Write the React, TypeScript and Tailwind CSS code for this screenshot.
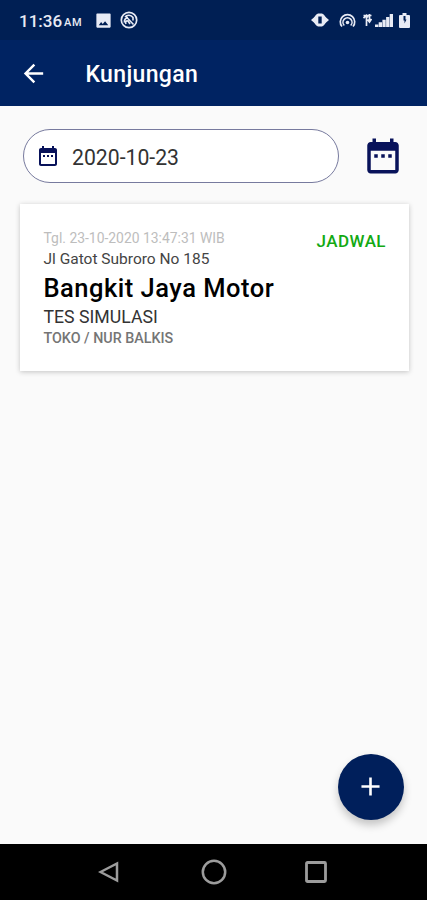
import type { ReactNode } from "react";

const CALENDAR =
  "M9 11H7v2h2v-2zm4 0h-2v2h2v-2zm4 0h-2v2h2v-2zm2-7h-1V2h-2v2H8V2H6v2H5c-1.11 0-1.99.9-1.99 2L3 20c0 1.1.89 2 2 2h14c1.1 0 2-.9 2-2V6c0-1.1-.9-2-2-2zm0 16H5V9h14v11z";

function Icon({ className, children }: { className: string; children: ReactNode }) {
  return (
    <svg viewBox="0 0 24 24" fill="currentColor" className={className}>
      {children}
    </svg>
  );
}

function StatusBar() {
  return (
    <div className="flex h-10 items-center bg-[#001f54] pl-[19px] pr-[17px] text-[#e8ebf5]">
      <span className="mt-0.5 w-[42px] whitespace-nowrap text-[17px] font-medium leading-10">11:36</span>
      <span className="ml-[3px] mt-1.5 w-[19px] text-[11px] font-medium tracking-[0.6px]">AM</span>
      <Icon className="ml-[11px] size-[19px]">
        <path d="M21 20V4c0-.6-.4-1-1-1H4c-.6 0-1 .4-1 1v16c0 .6.4 1 1 1h16c.6 0 1-.4 1-1zM6 18l3-4 2 2.500 3-3.500 4 5z" />
      </Icon>
      <svg viewBox="0 0 18 18" fill="none" stroke="currentColor" className="ml-[7px] size-[18px]">
        <circle cx="9" cy="9" r="7.700" strokeWidth="1.700" />
        <path d="M5 6C7 3.500 11 3.500 13 6.500V9.500M4.500 11.500C4 8.500 5.500 7 8 7M5.500 5l8 8.500M6 13c-1-2 0-3.500 2-3l2 3" strokeWidth="1.600" />
      </svg>

      <div className="ml-auto flex items-center">
        <svg viewBox="0 0 18 14" fill="currentColor" className="h-[14px] w-[18px]">
          <path d="M0 7l4-3.500v7zM18 7l-4-3.500v7z" />
          <path fillRule="evenodd" d="M7 .500h4C13.500 1.500 15 4 15 7s-1.500 5.500-4 6.500H7C4.500 12.500 3 10 3 7S4.500 1.500 7 .500zM7.300 3.500v7h3.400v-7z" />
        </svg>
        <svg viewBox="0 0 17 15" fill="none" stroke="currentColor" className="ml-[10px] h-[15px] w-[17px]">
          <path d="M3 13.500A7.200 7.200 0 1 1 14 13.500" strokeWidth="1.700" />
          <path d="M5.300 12.500A4.500 4.500 0 1 1 11.700 12.500" strokeWidth="1.600" />
          <circle cx="8.500" cy="9.500" r="1.800" fill="currentColor" stroke="none" />
        </svg>
        <svg viewBox="0 0 9 12" fill="none" stroke="currentColor" strokeWidth="1.700" className="ml-[7px] h-3 w-[9px]">
          <path d="M3.500 12V2M.500 4L3.500 1.300 5 3.500M6.500 0v8M4.500 5.500L6.500 8l2-3M.500 1.500h8" />
        </svg>
        <svg viewBox="0 0 18 13" fill="currentColor" className="ml-[3px] h-[13px] w-[18px]">
          <path d="M0 10.500h3.300v2.500H0zM3.700 8.300H7V13H3.700zM7.400 5.700h3.300V13H7.400zM11.100 3h3.200v10h-3.200zM14.700 0H18v13h-3.300z" />
        </svg>
        <svg viewBox="0 0 11 15" fill="currentColor" className="ml-[6px] h-[15px] w-[11px]">
          <path fillRule="evenodd" d="M3.500 0h4v2H10a1 1 0 0 1 1 1v11a1 1 0 0 1-1 1H1a1 1 0 0 1-1-1V3a1 1 0 0 1 1-1h2.500zM4.500 3v4.500h1v3L7.500 6.500h-1V3z" />
        </svg>
      </div>
    </div>
  );
}

function VisitCard() {
  return (
    <div className="ml-5 mr-[18px] mt-[21px] flex h-[167px] justify-between bg-white pl-[23.500px] pr-6 pt-[25px] shadow-[0_1px_5px_rgba(0,0,0,0.22)]">
      <div className="flex flex-col whitespace-nowrap">
        <span className="text-[13.900px] leading-[18px] text-[#bdbdbd]">Tgl. 23-10-2020 13:47:31 WIB</span>
        <span className="mt-0.5 text-[15.500px] leading-[21px] text-[#444]">Jl Gatot Subroro No 185</span>
        <span className="mt-[3px] text-[25.500px] font-medium leading-[31px] tracking-[0.500px] text-black">Bangkit Jaya Motor</span>
        <span className="mt-0.5 text-[17.700px] leading-[22px] text-[#333]">TES SIMULASI</span>
        <span className="text-[14.300px] font-medium leading-[20px] text-[#757575]">TOKO / NUR BALKIS</span>
      </div>
      <span className="-mr-px mt-px text-[17px] font-medium leading-[22px] tracking-[0.450px] text-[#13a913]">JADWAL</span>
    </div>
  );
}

export default function App() {
  return (
    <div className="relative flex h-[900px] w-[427px] flex-col overflow-hidden bg-[#fafafa] font-['Roboto',sans-serif]">
      <StatusBar />
      <header className="flex h-[66px] items-center bg-[#002362] pl-[19px] text-white">
        <Icon className="size-[29px]">
          <path d="M20 11H7.830l5.590-5.590L12 4l-8 8 8 8 1.410-1.410L7.830 13H20v-2z" />
        </Icon>
        <h1 className="ml-[37.500px] mt-1 text-[23px] font-medium leading-8 tracking-[0.350px]">Kunjungan</h1>
      </header>

      <main className="flex-1">
        <div className="flex items-center pl-[23px] pt-[23px]">
          <div className="flex h-[54px] w-[316px] items-center rounded-full border border-[#777a9e] bg-white pl-3">
            <Icon className="size-6 text-[#08125a]">
              <path d={CALENDAR} />
            </Icon>
            <span className="ml-[12px] mt-[3px] text-[21.200px] leading-7 text-[#333]">2020-10-23</span>
          </div>
          <Icon className="ml-[23px] size-[42px] text-[#08125a]">
            <path d={CALENDAR} />
          </Icon>
        </div>
        <VisitCard />
      </main>

      <button className="absolute bottom-20 right-[23px] flex size-[66px] items-center justify-center rounded-full bg-[#001f5b] text-white shadow-[0_5px_9px_rgba(0,0,0,0.22)]">
        <Icon className="mb-px mr-px size-[31px]">
          <path d="M19 13h-6v6h-2v-6H5v-2h6V5h2v6h6v2z" />
        </Icon>
      </button>

      <nav className="flex h-14 items-center bg-black pl-[98px] text-[#9c9c9c]">
        <svg viewBox="0 0 21 22" fill="none" stroke="currentColor" strokeWidth="2.500" className="h-[22px] w-[21px]">
          <path d="M2.500 11L19 2.500v17z" />
        </svg>
        <svg viewBox="0 0 26 26" fill="none" stroke="currentColor" strokeWidth="2.500" className="ml-[82px] size-[26px]">
          <circle cx="13" cy="13" r="11.200" />
        </svg>
        <svg viewBox="0 0 24 24" fill="none" stroke="currentColor" strokeWidth="2.800" className="ml-[77px] size-6">
          <rect x="2.500" y="2.500" width="19" height="19" rx="1" />
        </svg>
      </nav>
    </div>
  );
}
